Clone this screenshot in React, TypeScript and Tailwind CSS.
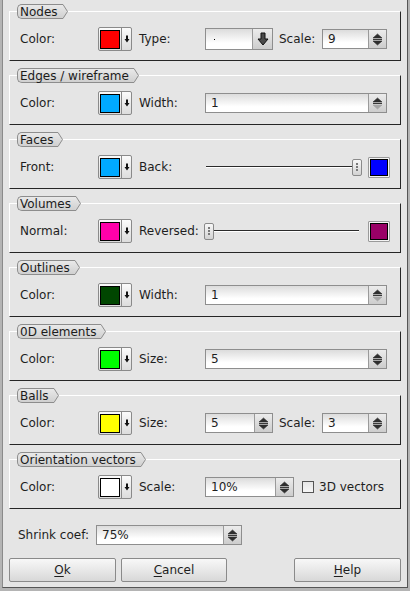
import React from 'react'

function Tab({ title }: { title: string }) {
  return (
    <div className="absolute left-[7px] top-[-8px] flex h-[15px]">
      <div className="flex items-center rounded-l-[5px] border-y border-l border-[#8d8d8d] bg-linear-to-b from-[#e9e9e9] to-[#d0d0d0] pl-[2px] pr-[4px] text-[12px] leading-none text-[#1c1c1c]">
        {title}
      </div>
      <svg width="6" height="15" viewBox="0 0 6 15" className="block">
        <defs>
          <linearGradient id="tabg" x1="0" y1="0" x2="0" y2="1">
            <stop offset="0" stopColor="#e9e9e9" />
            <stop offset="1" stopColor="#d0d0d0" />
          </linearGradient>
        </defs>
        <path d="M0 0.5 H1 L5.5 7.5 L1 14.5 H0 Z" fill="url(#tabg)" />
        <path d="M0 0.5 H1 L5.5 7.5 L1 14.5 H0" fill="none" stroke="#8d8d8d" />
      </svg>
    </div>
  )
}

function Group({ title, children }: { title: string; children: React.ReactNode }) {
  return (
    <div className="relative h-[50px] border border-t-white border-l-white border-r-[#262626] border-b-[#262626] pl-[10px] pt-[15px]">
      <Tab title={title} />
      <div className="flex h-[24px] items-center">{children}</div>
    </div>
  )
}

function SpinArrows({ downOff }: { downOff?: boolean }) {
  return (
    <svg width="11" height="13" viewBox="0 0 11 13">
      <path d="M5.5 1 L10 5 H1 Z" fill="#2e2e2e" stroke="#2e2e2e" strokeWidth="0.6" strokeLinejoin="round" />
      <path d="M1 6.5 H10" stroke="#3a3a3a" strokeWidth="1" />
      <path
        d="M1 8 H10 L5.5 12 Z"
        fill={downOff ? '#a5a5a5' : '#2e2e2e'}
        stroke={downOff ? '#a5a5a5' : '#2e2e2e'}
        strokeWidth="0.6"
        strokeLinejoin="round"
      />
    </svg>
  )
}

function Spinbox({ value, className, downOff }: { value: string; className: string; downOff?: boolean }) {
  return (
    <div className={'flex h-[20px] shrink-0 border border-[#8e8e8e] ' + className}>
      <div className="flex flex-1 items-center bg-linear-to-b from-[#dcdcdc] to-white to-70% pl-[5px] text-[12px]">
        {value}
      </div>
      <div className="flex w-[18px] items-center justify-center border-l border-[#9a9a9a] bg-linear-to-b from-[#ececec] to-[#cdcdcd]">
        <SpinArrows downOff={downOff} />
      </div>
    </div>
  )
}

function ColorButton({ swatch }: { swatch: string }) {
  return (
    <div className="flex h-[24px] w-[34px] shrink-0 rounded-[2px] border border-[#8a8a8a] bg-linear-to-b from-[#fbfbfb] to-[#dcdcdc]">
      <div className="flex w-[22px] items-center pl-[1px]">
        <div className={'h-[19px] w-[20px] border border-black ' + swatch} />
      </div>
      <div className="flex flex-1 items-center justify-center border-l border-[#8a8a8a]">
        <svg width="6" height="8" viewBox="0 0 6 8">
          <path d="M2 0.5 H4 V4 H5.5 L3 7.5 L0.5 4 H2 Z" fill="#111" />
        </svg>
      </div>
    </div>
  )
}

function ColorBox({ swatch }: { swatch: string }) {
  return (
    <div className="flex h-[21px] w-[22px] shrink-0 items-center justify-center rounded-[1px] border border-[#9a9a9a] bg-[#f4f4f4]">
      <div className={'h-[17px] w-[18px] border border-black ' + swatch} />
    </div>
  )
}

function Handle({ className }: { className: string }) {
  return (
    <div
      className={
        'flex h-[17px] w-[10px] flex-col items-center justify-center gap-[1px] rounded-[2px] border border-[#8a8a8a] bg-linear-to-b from-[#f8f8f8] to-[#d2d2d2] ' +
        className
      }
    >
      <div className="h-[2px] w-[2px] bg-[#7a7a7a]" />
      <div className="h-[2px] w-[2px] bg-[#7a7a7a]" />
      <div className="h-[2px] w-[2px] bg-[#7a7a7a]" />
    </div>
  )
}

function Slider({ atEnd }: { atEnd?: boolean }) {
  return (
    <div className="relative h-[17px] w-[158px] shrink-0">
      <div className="absolute left-[2px] right-[3px] top-[7px] h-[2px] border-t border-[#2a2a2a] bg-white" />
      {atEnd ? <Handle className="absolute right-0 top-0" /> : <Handle className="absolute left-0 top-0" />}
    </div>
  )
}

function Combo() {
  return (
    <div className="flex h-[22px] w-[68px] shrink-0 border border-[#8e8e8e]">
      <div className="flex flex-1 items-center bg-linear-to-b from-[#dcdcdc] to-white to-70% pl-[8px]">
        <div className="h-[1px] w-[1px] bg-black" />
      </div>
      <div className="flex w-[20px] items-center justify-center border-l border-[#9a9a9a] bg-linear-to-b from-[#ececec] to-[#cdcdcd]">
        <svg width="12" height="14" viewBox="0 0 12 14">
          <path d="M4 1 H8 V7 H11 L6 13 L1 7 H4 Z" fill="#4a4a4a" stroke="#111" strokeWidth="1" strokeLinejoin="round" />
        </svg>
      </div>
    </div>
  )
}

function Btn({ u, rest, className }: { u: string; rest: string; className: string }) {
  return (
    <div
      className={
        'flex h-[24px] items-center justify-center rounded-[2px] border border-[#8a8a8a] bg-linear-to-b from-[#f8f8f8] to-[#d8d8d8] text-[12px] ' +
        className
      }
    >
      <span className="underline underline-offset-[2px]">{u}</span>
      {rest}
    </div>
  )
}

export default function App() {
  const lbl = 'w-[78px] shrink-0'
  const lbl2 = 'ml-[7px] w-[66px] shrink-0'
  return (
    <div className="h-[591px] w-[410px] border-b-[3px] border-l-[2px] border-r-[2px] border-[#b4b4b4] bg-[#e5e5e5]">
      <div className="flex h-full flex-col border-b border-l border-r border-b-[#555] border-l-[#8a8a8a] border-r-[#555] px-[6px] pt-[11px] font-['DejaVu_Sans',sans-serif] text-[12px] text-[#1e1e1e]">
        <div className="flex flex-col gap-[14px]">
          <Group title="Nodes">
            <span className={lbl}>Color:</span>
            <ColorButton swatch="bg-[#ff0000]" />
            <span className="ml-[7px] w-[66px] shrink-0">Type:</span>
            <Combo />
            <span className="ml-[6px] w-[43px] shrink-0">Scale:</span>
            <Spinbox value="9" className="w-[65px]" />
          </Group>
          <Group title="Edges / wireframe">
            <span className={lbl}>Color:</span>
            <ColorButton swatch="bg-[#00aaff]" />
            <span className={lbl2}>Width:</span>
            <Spinbox value="1" className="w-[182px]" downOff />
          </Group>
          <Group title="Faces">
            <span className={lbl}>Front:</span>
            <ColorButton swatch="bg-[#00aaff]" />
            <span className="ml-[7px] w-[65px] shrink-0">Back:</span>
            <Slider atEnd />
            <div className="ml-[6px]">
              <ColorBox swatch="bg-[#0000ff]" />
            </div>
          </Group>
          <Group title="Volumes">
            <span className={lbl}>Normal:</span>
            <ColorButton swatch="bg-[#ff00aa]" />
            <span className="ml-[7px] w-[65px] shrink-0">Reversed:</span>
            <Slider />
            <div className="ml-[6px]">
              <ColorBox swatch="bg-[#990066]" />
            </div>
          </Group>
          <Group title="Outlines">
            <span className={lbl}>Color:</span>
            <ColorButton swatch="bg-[#004600]" />
            <span className={lbl2}>Width:</span>
            <Spinbox value="1" className="w-[182px]" downOff />
          </Group>
          <Group title="0D elements">
            <span className={lbl}>Color:</span>
            <ColorButton swatch="bg-[#00ff00]" />
            <span className={lbl2}>Size:</span>
            <Spinbox value="5" className="w-[182px]" />
          </Group>
          <Group title="Balls">
            <span className={lbl}>Color:</span>
            <ColorButton swatch="bg-[#ffff00]" />
            <span className={lbl2}>Size:</span>
            <Spinbox value="5" className="w-[68px]" />
            <span className="ml-[6px] w-[43px] shrink-0">Scale:</span>
            <Spinbox value="3" className="w-[65px]" />
          </Group>
          <Group title="Orientation vectors">
            <span className={lbl}>Color:</span>
            <ColorButton swatch="bg-[#ffffff]" />
            <span className={lbl2}>Scale:</span>
            <Spinbox value="10%" className="w-[89px]" />
            <div className="ml-[8px] h-[12px] w-[12px] shrink-0 border border-[#555] bg-linear-to-b from-[#e6e6e6] to-[#f6f6f6]" />
            <span className="ml-[5px]">3D vectors</span>
          </Group>
        </div>
        <div className="mt-[16px] flex h-[20px] items-center pl-[9px]">
          <span className="w-[78px] shrink-0">Shrink coef:</span>
          <Spinbox value="75%" className="w-[146px]" />
        </div>
        <div className="mt-[13px] flex">
          <Btn u="O" rest="k" className="w-[107px]" />
          <Btn u="C" rest="ancel" className="ml-[5px] w-[106px]" />
          <Btn u="H" rest="elp" className="ml-auto w-[107px]" />
        </div>
      </div>
    </div>
  )
}
